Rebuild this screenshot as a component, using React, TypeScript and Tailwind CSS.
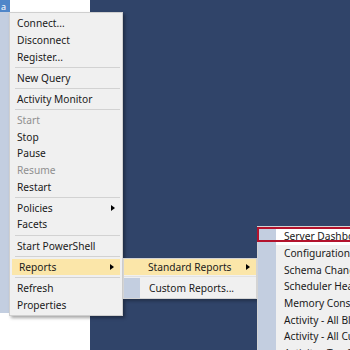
import { ReactNode } from 'react';

type Entry =
  | { kind: 'item'; label: string; disabled?: boolean; arrow?: boolean; active?: boolean }
  | { kind: 'sep' };

const mainMenu: Entry[] = [
  { kind: 'item', label: 'Connect...' },
  { kind: 'item', label: 'Disconnect' },
  { kind: 'item', label: 'Register...' },
  { kind: 'sep' },
  { kind: 'item', label: 'New Query' },
  { kind: 'sep' },
  { kind: 'item', label: 'Activity Monitor' },
  { kind: 'sep' },
  { kind: 'item', label: 'Start', disabled: true },
  { kind: 'item', label: 'Stop' },
  { kind: 'item', label: 'Pause' },
  { kind: 'item', label: 'Resume', disabled: true },
  { kind: 'item', label: 'Restart' },
  { kind: 'sep' },
  { kind: 'item', label: 'Policies', arrow: true },
  { kind: 'item', label: 'Facets' },
  { kind: 'sep' },
  { kind: 'item', label: 'Start PowerShell' },
  { kind: 'sep' },
  { kind: 'item', label: 'Reports', arrow: true, active: true },
  { kind: 'sep' },
  { kind: 'item', label: 'Refresh' },
  { kind: 'item', label: 'Properties' },
];

const standardReports = [
  'Server Dashboard',
  'Configuration Changes History',
  'Schema Changes History',
  'Scheduler Health',
  'Memory Consumption',
  'Activity - All Blocking Transactions',
  'Activity - All Cursors',
  'Activity - Top Sessions',
];

function Arrow({ right = 'right-[7px]' }: { right?: string }) {
  return (
    <svg className={`absolute ${right} h-[6px] w-[4px]`} viewBox="0 0 4 6">
      <path d="M0 0 L4 3 L0 6 Z" fill="#000" />
    </svg>
  );
}

function Row({ children, active, disabled }: { children: ReactNode; active?: boolean; disabled?: boolean }) {
  return (
    <div
      className={`relative flex h-[16.67px] items-center whitespace-nowrap pl-[7px] ${
        active ? 'mx-[2px] bg-[#fbe6a9] pl-[5px]' : ''
      } ${disabled ? 'text-[#8f8f8f]' : 'text-[#1a1a1a]'}`}
    >
      {children}
    </div>
  );
}

export default function App() {
  return (
    <div className="relative flex h-[350px] w-[350px] overflow-hidden bg-[#304469] font-['Noto_Sans',sans-serif] text-[10.2px] leading-none">
      {/* Object explorer behind the menu */}
      <div className="flex w-[90px] shrink-0 flex-col">
        <div className="flex h-[12px]">
          <div className="flex w-[10px] shrink-0 items-center bg-[#4f86c9] pl-[1px] text-[9px] text-white">a</div>
          <div className="flex-1 bg-white" />
        </div>
        <div className="flex h-[301px]">
          <div className="w-[9px] shrink-0 bg-[#c3cee0]" />
          <div className="flex-1 bg-white" />
        </div>
        <div className="flex-1 bg-white" />
      </div>
      <div className="flex-1" />

      {/* Context menu */}
      <div className="absolute left-[9px] top-[12px] w-[114px] border border-[#cfcfcf] bg-[#f0f0f0] py-[2px] shadow-[2px_2px_3px_rgba(0,0,0,0.35)]">
        {mainMenu.map((e, i) =>
          e.kind === 'sep' ? (
            <div key={i} className="flex h-[4.5px] items-center pl-[5px] pr-[2px]">
              <div className="h-px w-full bg-[#d2d2d2]" />
            </div>
          ) : (
            <Row key={i} active={e.active} disabled={e.disabled}>
              {e.label}
              {e.arrow && <Arrow right={e.active ? 'right-[6px]' : 'right-[7px]'} />}
            </Row>
          )
        )}
      </div>

      {/* Reports submenu */}
      <div className="absolute left-[123px] top-[257.5px] w-[134px] border border-[#d4d4d4] bg-[#f0f0f0] text-[#1a1a1a] shadow-[2px_2px_3px_rgba(0,0,0,0.3)]">
        <div className="relative flex h-[16.5px] items-center bg-[#fbe6a9] pl-[24px]">
          Standard Reports
          <Arrow right="right-[6px]" />
        </div>
        <div className="flex h-[2.5px] items-center">
          <div className="h-px w-full bg-[#e2e2e2]" />
        </div>
        <div className="flex h-[20px]">
          <div className="w-[16px] shrink-0 bg-[#c3cee0]" />
          <div className="flex flex-1 items-center pl-[9px] pt-[2px]">Custom Reports...</div>
        </div>
      </div>

      {/* Standard Reports submenu */}
      <div className="absolute left-[257px] top-[226px] flex w-[200px] border border-[#d4d4d4] bg-[#f0f0f0] text-[#1a1a1a]">
        <div className="w-[18px] shrink-0 bg-[#c3cee0]" />
        <div className="min-w-0 flex-1 pt-[1px]">
          {standardReports.map((r, i) => (
            <div
              key={r}
              className={`flex h-[16.67px] items-center whitespace-nowrap pl-[8px] ${i === 0 ? 'bg-white' : ''}`}
            >
              {r}
            </div>
          ))}
        </div>
      </div>

      {/* Annotation box */}
      <div className="absolute left-[257px] top-[227px] h-[15px] w-[120px] border-[2.5px] border-[#b3122c]" />
    </div>
  );
}
